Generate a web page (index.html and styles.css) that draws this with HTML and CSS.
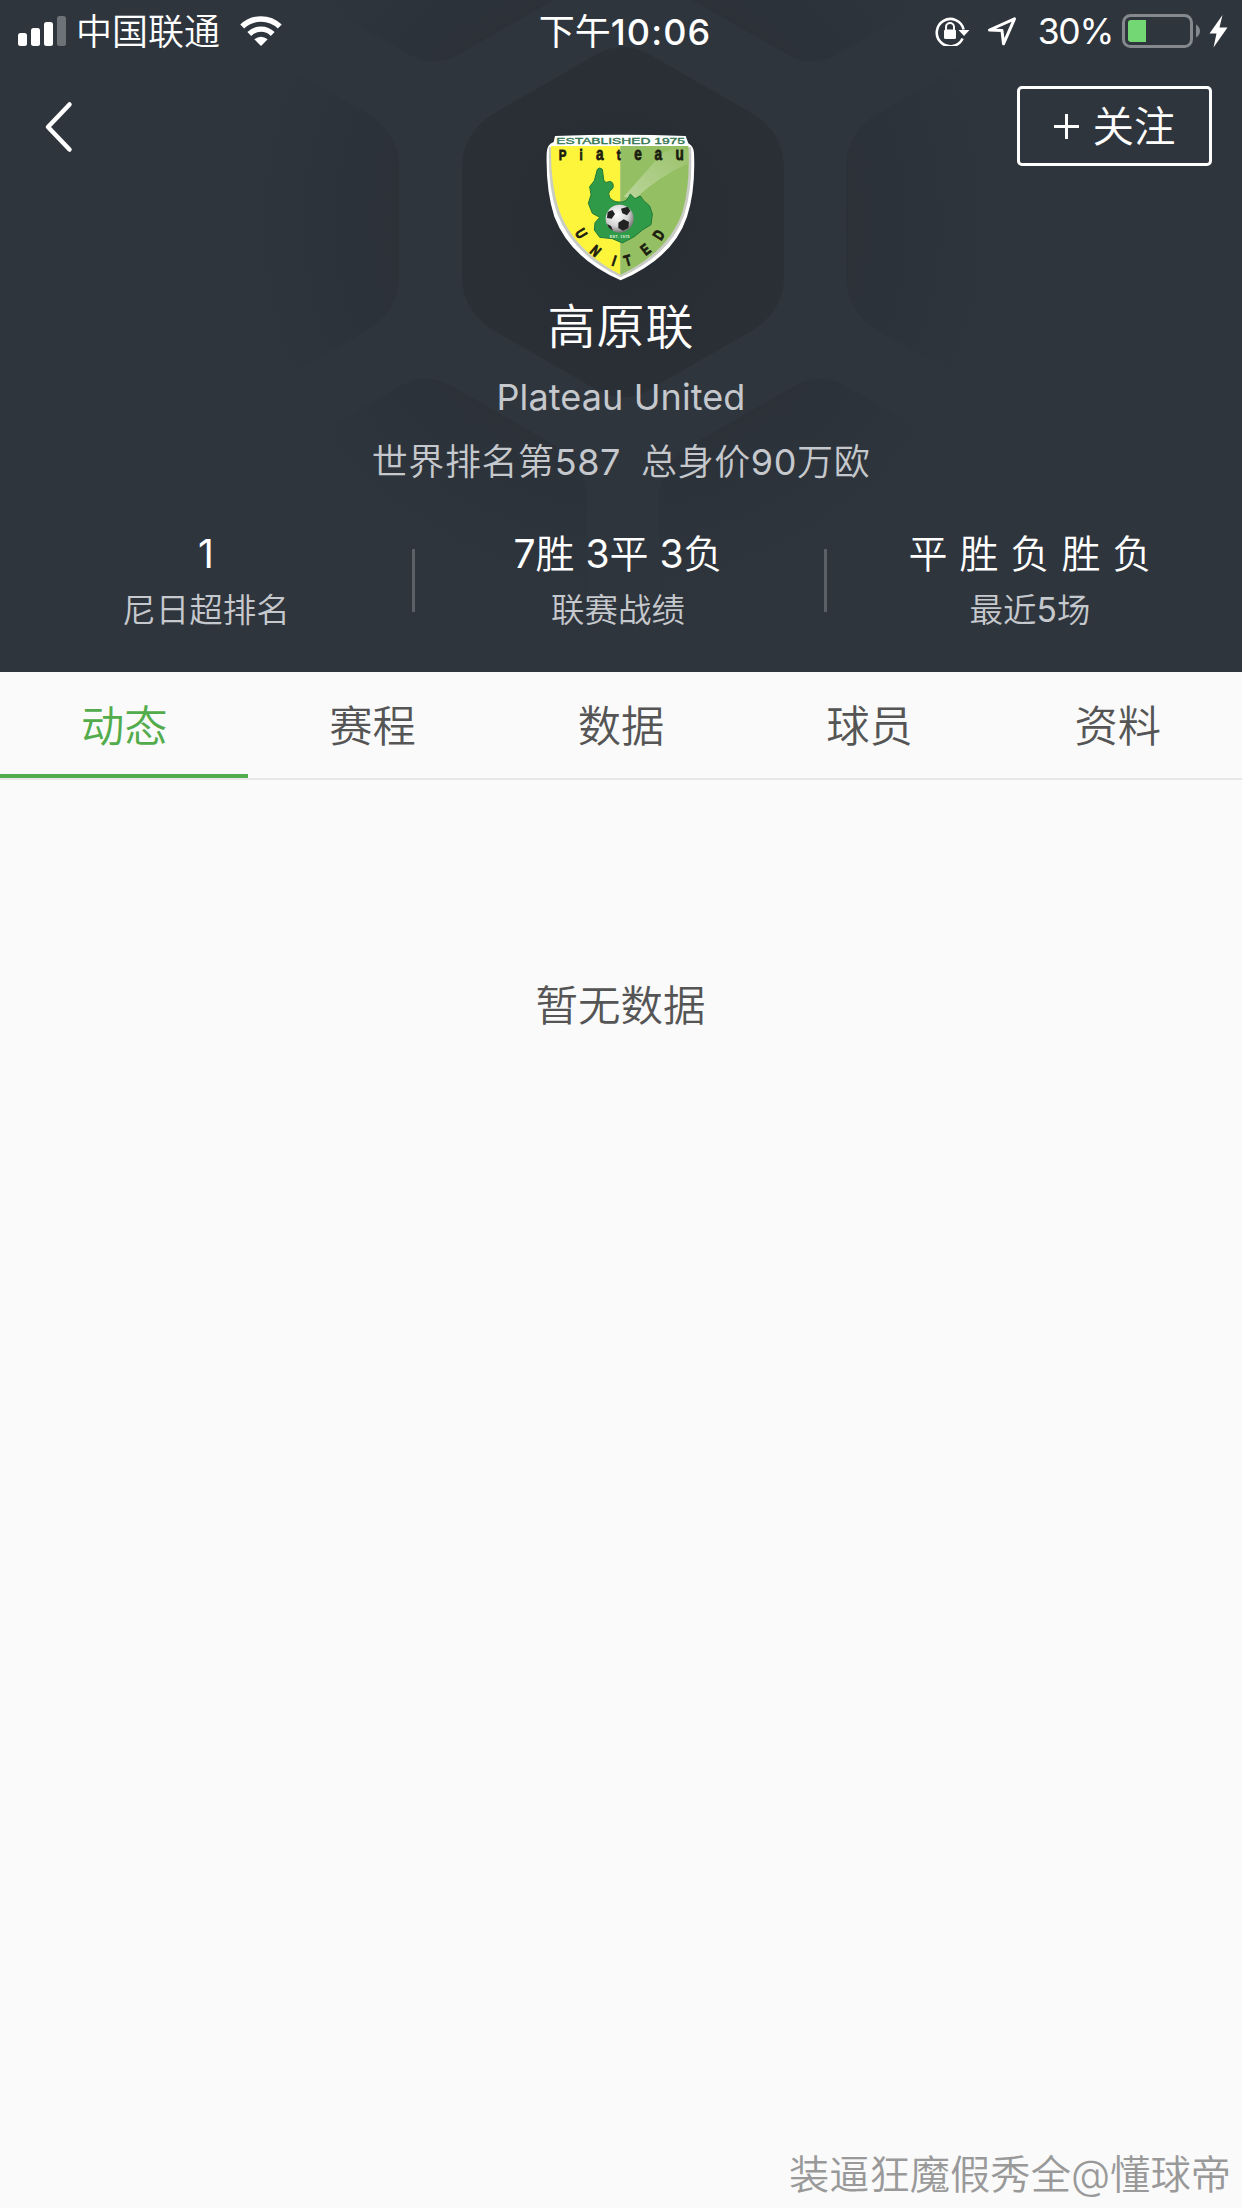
FILE: index.html
```html
<!DOCTYPE html>
<html lang="zh-CN">
<head>
    <meta charset="UTF-8">
    <meta name="viewport" content="width=device-width, initial-scale=1.0">
    <title>高原联</title>
    <link rel="stylesheet" href="styles.css">
</head>
<body>
    <header class="header">
        <svg class="hexagons" viewBox="0 0 1242 672" preserveAspectRatio="none">
            <defs>
                <radialGradient id="dark" gradientUnits="userSpaceOnUse" cx="622" cy="222" r="430">
                    <stop offset="0" stop-color="#272b32"/>
                    <stop offset="0.35" stop-color="#2a2f36"/>
                    <stop offset="0.6" stop-color="#2c3239"/>
                    <stop offset="0.8" stop-color="#2e343c"/>
                    <stop offset="1" stop-color="#2f353d"/>
                </radialGradient>
                <path id="hex" d="M-26 -168 Q0 -183 26 -168 L132 -107 Q161 -87 161 -55 V55 Q161 87 132 107 L26 168 Q0 183 -26 168 L-132 107 Q-161 87 -161 55 V-55 Q-161 -87 -132 -107 Z"/>
                <clipPath id="grid">
                    <use href="#hex" x="623" y="222"/>
                    <use href="#hex" x="238" y="222"/>
                    <use href="#hex" x="1007" y="222"/>
                    <use href="#hex" x="426" y="554"/>
                    <use href="#hex" x="820" y="554"/>
                    <use href="#hex" x="434" y="-114"/>
                    <use href="#hex" x="812" y="-114"/>
                </clipPath>
            </defs>
            <rect width="1242" height="672" fill="url(#dark)" clip-path="url(#grid)"/>
        </svg>

        <div class="status">
            <div class="status-left">
                <svg class="signal" width="48" height="30" viewBox="0 0 48 30" fill="#fff">
                    <rect x="0" y="17" width="9" height="13" rx="2.5"/>
                    <rect x="13" y="12" width="9" height="18" rx="2.5"/>
                    <rect x="26" y="6" width="9" height="24" rx="2.5"/>
                    <rect x="39" y="0" width="9" height="30" rx="2.5" opacity=".3"/>
                </svg>
                <span class="carrier">中国联通</span>
                <svg class="wifi" width="42" height="30" viewBox="0 0 42 30">
                    <path d="M2.2 10.6 A27 27 0 0 1 39.8 10.6" fill="none" stroke="#fff" stroke-width="5.6"/>
                    <path d="M9.3 18 A16.5 16.5 0 0 1 32.7 18" fill="none" stroke="#fff" stroke-width="5.4"/>
                    <path d="M14.3 23.3 Q21 18.2 27.7 23.3 L21 30 Z" fill="#fff"/>
                </svg>
            </div>
            <div class="time">下午<span class="clock">10:06</span></div>
            <div class="status-right">
                <svg class="lock" width="35" height="30" viewBox="0 0 35 30">
                    <path d="M27.6 22.5 A13.6 13.6 0 1 1 28.6 13.5" fill="none" stroke="#fff" stroke-width="2.6"/>
                    <path d="M23.5 14 H34.5 L29 20 Z" fill="#fff"/>
                    <rect x="9" y="13.5" width="12" height="9.5" rx="1.5" fill="#fff"/>
                    <path d="M11 14 V11 A4 4 0 0 1 19 11 V14" fill="none" stroke="#fff" stroke-width="2"/>
                </svg>
                <svg class="arrow" width="30" height="30" viewBox="0 0 30 30">
                    <path d="M2.5 14 L27.5 2.8 L16.5 27.8 L15 14.6 Z" fill="none" stroke="#fff" stroke-width="3" stroke-linejoin="round"/>
                </svg>
                <span class="percent">30%</span>
                <svg class="battery" width="79" height="34" viewBox="0 0 79 34">
                    <rect x="1.5" y="1.5" width="68" height="31" rx="7" fill="none" stroke="#85898d" stroke-width="3"/>
                    <path d="M24 6 H9 Q6 6 6 9 V25 Q6 28 9 28 H24 Z" fill="#73d873"/>
                    <path d="M74 10.5 Q78 13 78 17 Q78 21 74 23.5 Z" fill="#85898d"/>
                </svg>
                <svg class="bolt" width="19" height="33" viewBox="0 0 19 33">
                    <path d="M13.5 0 L0.5 18.5 H7.5 L4.5 32.5 L18.5 12.5 H10.5 Z" fill="#fff"/>
                </svg>
            </div>
        </div>

        <div class="nav">
            <svg class="back" width="30" height="52" viewBox="0 0 30 52">
                <path d="M25.5 3.5 L4 26 L25.5 48.5" fill="none" stroke="#fff" stroke-width="4.5" stroke-linecap="round" stroke-linejoin="round"/>
            </svg>

            <svg class="crest" viewBox="0 0 540 510">
                <defs>
                    <clipPath id="shield">
                        <path d="M66 78 H478 Q484 190 462 270 Q424 392 275 464 Q134 392 90 270 Q64 190 66 78 Z"/>
                    </clipPath>
                    <linearGradient id="shine" x1="0" y1="1" x2="1" y2="0">
                        <stop offset="0" stop-color="#fff" stop-opacity=".35"/>
                        <stop offset="1" stop-color="#fff" stop-opacity=".05"/>
                    </linearGradient>
                    <radialGradient id="ball" cx=".4" cy=".35" r=".7">
                        <stop offset="0" stop-color="#fff"/>
                        <stop offset=".6" stop-color="#d2d2d2"/>
                        <stop offset="1" stop-color="#666"/>
                    </radialGradient>
                </defs>
                <path d="M78 48 Q275 40 470 48 L478 70 Q494 78 495 100 Q500 210 474 290 Q432 415 275 481 Q124 415 76 290 Q50 210 53 100 Q54 72 74 66 Z" fill="#fff"/>
                <path d="M60 82 H486 Q492 200 467 280 Q428 402 275 472 Q130 402 84 280 Q56 200 60 82 Z" fill="#c9ccc4"/>
                <g clip-path="url(#shield)">
                    <rect x="50" y="70" width="224" height="400" fill="#fdf53b"/>
                    <rect x="274" y="70" width="220" height="400" fill="#95bf63"/>
                    <path d="M284 230 L400 100 Q440 78 478 90 V130 Q390 170 318 236 Z" fill="url(#shine)"/>
                </g>
                <path d="M205 148 Q212 140 220 148 L224 178 Q226 190 236 186 Q250 180 253 196 Q254 208 243 212 Q236 220 242 232 Q252 246 270 246 Q292 250 304 222 L318 236 L334 228 L344 242 L362 258 L370 282 L366 314 L340 330 L316 350 L280 369 L250 356 L212 352 L196 330 L198 308 L212 292 L190 280 L178 250 L186 224 L182 200 L196 182 Z" fill="#2f9a47" stroke="#217a38" stroke-width="3"/>
                <circle cx="272" cy="296" r="42" fill="url(#ball)"/>
                <path d="M276 266 L296 260 L304 272 L294 286 L280 280 Z M236 276 L250 270 L258 282 L248 296 L234 294 Z M268 308 L284 298 L300 306 L298 324 L282 332 L268 324 Z M234 312 L246 318 L252 332 L240 324 Z" fill="#222"/>
                <text x="242" y="353" textLength="60" class="crest-est">EST. 1975</text>
                <text x="82" y="73" textLength="386" lengthAdjust="spacingAndGlyphs" class="crest-top">ESTABLISHED 1975</text>
                <g class="crest-name">
                    <text transform="translate(101 121) scale(.75 1)">P</text>
                    <text transform="translate(156 121) scale(.75 1)">i</text>
                    <text transform="translate(212 121) scale(.75 1)" class="low">a</text>
                    <text transform="translate(269 121) scale(.75 1)">t</text>
                    <text transform="translate(327 121) scale(.75 1)" class="low">e</text>
                    <text transform="translate(388 121) scale(.75 1)" class="low">a</text>
                    <text transform="translate(452 121) scale(.75 1)" class="low">u</text>
                </g>
                <g class="crest-name">
                    <text transform="translate(156 341) rotate(58) scale(.75 1)" y="15">U</text>
                    <text transform="translate(199 393) rotate(40) scale(.75 1)" y="15">N</text>
                    <text transform="translate(255 423) rotate(18) scale(.75 1)" y="15">I</text>
                    <text transform="translate(296 422) rotate(-16) scale(.75 1)" y="15">T</text>
                    <text transform="translate(350 389) rotate(-38) scale(.75 1)" y="15">E</text>
                    <text transform="translate(390 345) rotate(-58) scale(.75 1)" y="15">D</text>
                </g>
            </svg>

            <button class="follow">
                <svg width="25" height="25" viewBox="0 0 25 25">
                    <path d="M12.5 0 V25 M0 12.5 H25" stroke="#fff" stroke-width="3"/>
                </svg>
                <span>关注</span>
            </button>
        </div>

        <div class="club">
            <h1 class="club-name">高原联</h1>
            <p class="club-en">Plateau United</p>
            <p class="club-info">
                <span>世界排名第<span class="num">587</span></span>
                <span>总身价<span class="num">90</span>万欧</span>
            </p>
        </div>

        <div class="stats">
            <div class="stat">
                <p class="stat-value"><span class="num">1</span></p>
                <p class="stat-label">尼日超排名</p>
            </div>
            <div class="stat">
                <p class="stat-value"><span class="num">7</span>胜 <span class="num">3</span>平 <span class="num">3</span>负</p>
                <p class="stat-label">联赛战绩</p>
            </div>
            <div class="stat">
                <p class="stat-value recent">平 胜 负 胜 负</p>
                <p class="stat-label">最近<span class="num">5</span>场</p>
            </div>
        </div>
    </header>

    <nav class="tabs">
        <a class="tab active">动态</a>
        <a class="tab">赛程</a>
        <a class="tab">数据</a>
        <a class="tab">球员</a>
        <a class="tab">资料</a>
    </nav>

    <main class="content">
        <p class="empty">暂无数据</p>
        <p class="watermark">装逼狂魔假秀全@懂球帝</p>
    </main>
</body>
</html>
```
FILE: styles.css
```css
* {
    box-sizing: border-box;
    margin: 0;
    padding: 0;
}

body {
    width: 1242px;
    height: 2208px;
    display: flex;
    flex-direction: column;
    background-color: #fafafa;
    font-family: Inter, "Noto Sans CJK SC", sans-serif;
    font-weight: 350;
    color: #555;
    overflow: hidden;
}

svg {
    display: block;
    flex: none;
}

.num {
    font-weight: 400;
}

.header {
    position: relative;
    height: 672px;
    background-color: #2f353d;
    color: #fff;
    overflow: hidden;
}

.hexagons {
    position: absolute;
    top: 0;
    left: 0;
    width: 100%;
    height: 100%;
}

/* barra de status */
.status {
    position: relative;
    display: grid;
    grid-template-columns: 1fr auto 1fr;
    align-items: center;
    height: 60px;
    padding: 0 14px 0 18px;
    font-size: 36px;
    line-height: 60px;
}

.status-left,
.status-right {
    display: flex;
    align-items: center;
}

.status-right {
    justify-content: flex-end;
}

.carrier {
    margin-left: 10px;
    padding-top: 2px;
}

.wifi {
    margin-left: 20px;
}

.time {
    padding: 2px 0 0 4px;
    font-weight: 400;
}

.clock {
    font-weight: 550;
    letter-spacing: 1.1px;
}

.lock {
    margin-top: -1px;
}

.arrow {
    margin-left: 17px;
}

.percent {
    margin-left: 21px;
    padding-top: 2px;
    font-size: 35.5px;
    font-weight: 400;
    letter-spacing: -1.3px;
}

.battery {
    margin-left: 9px;
}

.bolt {
    margin-left: 8px;
}

.nav {
    position: relative;
    display: grid;
    grid-template-columns: 1fr 180px 1fr;
    align-items: start;
    height: 230px;
    padding: 26px 30px 0 44px;
}

.back {
    margin-top: 15px;
}

.crest {
    width: 180px;
    height: 170px;
    margin: 34px 0 0 -9px;
}

.crest-top {
    font-family: "Liberation Sans", sans-serif;
    font-size: 25px;
    font-weight: 400;
    fill: #33734f;
    stroke: #33734f;
}

.crest-est {
    font-family: "Liberation Sans", sans-serif;
    font-size: 11px;
    font-weight: 700;
    fill: #e9f5e4;
}

.crest-name {
    font-family: "Liberation Sans", sans-serif;
    font-size: 46px;
    font-weight: 700;
    text-anchor: middle;
    fill: #1c1c10;
    stroke: #1c1c10;
    stroke-width: 2.5px;
}

.low {
    font-size: 54px;
}

.follow {
    justify-self: end;
    display: flex;
    align-items: center;
    justify-content: center;
    gap: 13px;
    width: 195px;
    height: 80px;
    padding-left: 1px;
    border: 3px solid #fff;
    border-radius: 5px;
    background: none;
    color: #fff;
    font: inherit;
    font-size: 41.5px;
    line-height: 60px;
}

.follow span {
    padding-top: 1px;
}

.club {
    position: relative;
    text-align: center;
    color: #c5c8cc;
}

.club-name {
    padding-top: 1px;
    font-size: 48px;
    font-weight: 350;
    line-height: 72px;
    letter-spacing: 1px;
    color: #fff;
}

.club-en {
    margin-top: 9px;
    font-size: 36px;
    font-weight: 400;
    line-height: 50px;
    letter-spacing: 0.1px;
}

.club-info {
    display: flex;
    justify-content: center;
    gap: 20px;
    margin-top: 14px;
    font-size: 36px;
    line-height: 52px;
    letter-spacing: 0.6px;
}

.stats {
    position: relative;
    display: flex;
    padding: 29px 6px 0 0;
    margin-top: 12px;
}

.stat {
    position: relative;
    flex: 1;
    text-align: center;
}

/* linha entre as colunas */
.stat + .stat::before {
    content: "";
    position: absolute;
    left: 0;
    top: 20px;
    width: 3px;
    height: 63px;
    background-color: #5b6067;
}

.stat-value {
    font-size: 39px;
    line-height: 50px;
}

.recent {
    word-spacing: 1px;
}

.stat-label {
    margin-top: 6px;
    font-size: 33.5px;
    line-height: 50px;
    color: #c5c8cc;
}

.tabs {
    display: flex;
    height: 108px;
    border-bottom: 2px solid #e8e8e8;
}

.tab {
    flex: 1;
    padding-top: 2px;
    font-size: 43.3px;
    line-height: 104px;
    text-align: center;
}

.active {
    color: #53ac4c;
    border-bottom: 4px solid #53ac4c;
}

.content {
    flex: 1;
    display: flex;
    flex-direction: column;
    justify-content: space-between;
}

.empty {
    padding: 196px 1px 0 0;
    font-size: 42.5px;
    line-height: 60px;
    text-align: center;
}

.watermark {
    padding: 0 11px 3px 0;
    font-size: 40.3px;
    line-height: 60px;
    text-align: right;
    color: #999;
}
```
